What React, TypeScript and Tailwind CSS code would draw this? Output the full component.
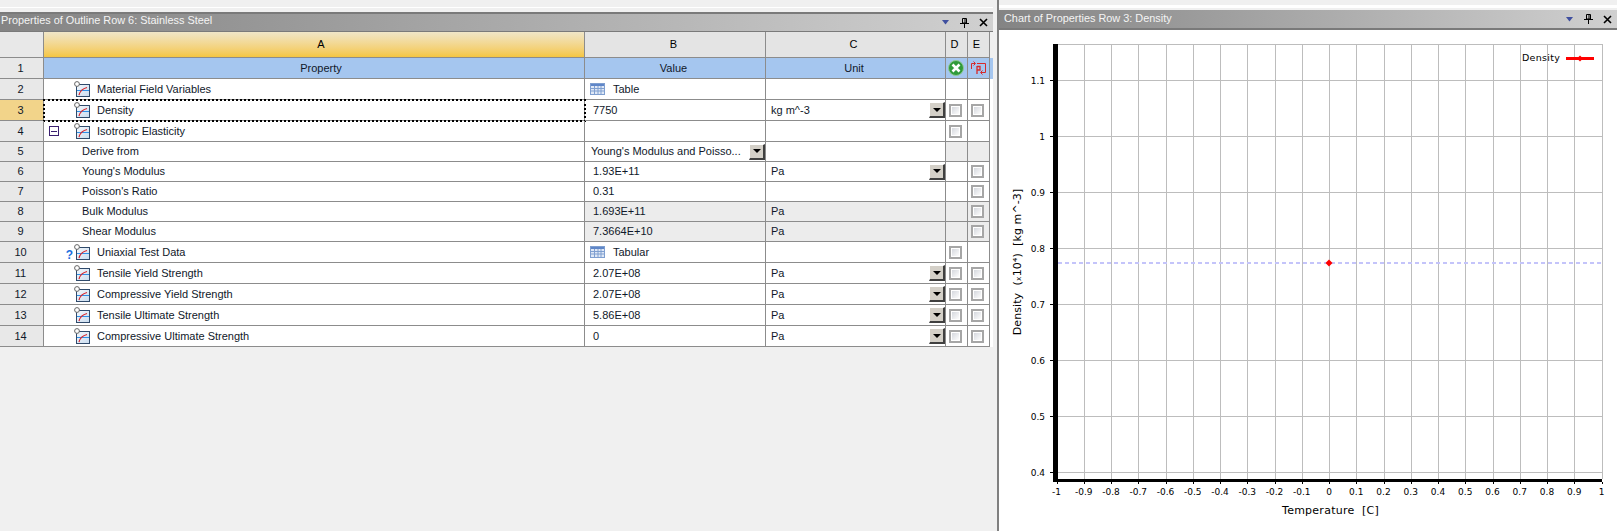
import React from 'react'

const cols = 'grid grid-cols-[44px_541px_181px_180px_22px_22px]'
const cell = 'border-r border-b border-[#8c8c8c] flex items-center min-w-0'

type RowData = {
  n: number
  h: string
  label: string
  kind: 'prop' | 'sub'
  q?: boolean
  minus?: boolean
  value?: string
  table?: boolean
  unit?: string
  unitDrop?: boolean
  valueDrop?: boolean
  d?: boolean
  e?: boolean
  grey?: boolean
  greyDE?: boolean
  active?: boolean
}

const rows: RowData[] = [
  { n: 2, h: 'h-[21px]', label: 'Material Field Variables', kind: 'prop', value: 'Table', table: true },
  { n: 3, h: 'h-[21px]', label: 'Density', kind: 'prop', value: '7750', unit: 'kg m^-3', unitDrop: true, d: true, e: true, active: true },
  { n: 4, h: 'h-[21px]', label: 'Isotropic Elasticity', kind: 'prop', minus: true, d: true },
  { n: 5, h: 'h-[20px]', label: 'Derive from', kind: 'sub', value: "Young's Modulus and Poisso...", valueDrop: true, greyDE: true },
  { n: 6, h: 'h-[20px]', label: "Young's Modulus", kind: 'sub', value: '1.93E+11', unit: 'Pa', unitDrop: true, e: true },
  { n: 7, h: 'h-[20px]', label: "Poisson's Ratio", kind: 'sub', value: '0.31', e: true },
  { n: 8, h: 'h-[20px]', label: 'Bulk Modulus', kind: 'sub', value: '1.693E+11', unit: 'Pa', e: true, grey: true },
  { n: 9, h: 'h-[20px]', label: 'Shear Modulus', kind: 'sub', value: '7.3664E+10', unit: 'Pa', e: true, grey: true },
  { n: 10, h: 'h-[21px]', label: 'Uniaxial Test Data', kind: 'prop', q: true, value: 'Tabular', table: true, d: true },
  { n: 11, h: 'h-[21px]', label: 'Tensile Yield Strength', kind: 'prop', value: '2.07E+08', unit: 'Pa', unitDrop: true, d: true, e: true },
  { n: 12, h: 'h-[21px]', label: 'Compressive Yield Strength', kind: 'prop', value: '2.07E+08', unit: 'Pa', unitDrop: true, d: true, e: true },
  { n: 13, h: 'h-[21px]', label: 'Tensile Ultimate Strength', kind: 'prop', value: '5.86E+08', unit: 'Pa', unitDrop: true, d: true, e: true },
  { n: 14, h: 'h-[21px]', label: 'Compressive Ultimate Strength', kind: 'prop', value: '0', unit: 'Pa', unitDrop: true, d: true, e: true },
]

function PropIcon() {
  return (
    <svg width="16" height="16" viewBox="0 0 16 16" className="shrink-0">
      <defs>
        <linearGradient id="propBg" x1="0" y1="0" x2="1" y2="1">
          <stop offset="0" stopColor="#f4f8fc" />
          <stop offset="1" stopColor="#c9dcef" />
        </linearGradient>
      </defs>
      <rect x="2.5" y="3.5" width="13" height="12" fill="url(#propBg)" stroke="#2f4a6b" />
      <path d="M3 9.5H15" stroke="#2f8fe8" />
      <path d="M5 14C6 10 9 7.5 13 6.5" stroke="#d8232a" strokeWidth="1.2" fill="none" />
      <circle cx="3" cy="3" r="2.4" fill="#fff" stroke="#666" />
    </svg>
  )
}

function TableIcon() {
  return (
    <svg width="15" height="12" viewBox="0 0 15 12" className="shrink-0">
      <rect x="0.5" y="0.5" width="14" height="11" fill="#dfe8f6" stroke="#7f9fd0" />
      <rect x="1" y="1" width="13" height="2" fill="#5f86c8" />
      <path d="M1 5.5H14M1 8H14M4.5 3V11M8 3V11M11 3V11" stroke="#7f9fd0" />
    </svg>
  )
}

function Drop() {
  return (
    <div className="w-4 h-4 shrink-0 bg-[#d4d0c8] border-t border-l border-white border-r-2 border-b-2 border-r-[#404040] border-b-[#404040] flex items-center justify-center">
      <svg width="8" height="4" viewBox="0 0 8 4">
        <path d="M0 0H8L4 4Z" fill="#000" />
      </svg>
    </div>
  )
}

function Check() {
  return (
    <div className="w-[13px] h-[13px] mr-[2px] border-2 border-[#a6a6a6] bg-white p-px">
      <div className="w-full h-full bg-gradient-to-br from-[#d5d8de] to-[#fdfdfd]" />
    </div>
  )
}

function TitleBar({ title, className, titlePad, iconPad }: { title: string; className: string; titlePad: string; iconPad: string }) {
  return (
    <div className={`flex items-center justify-between bg-gradient-to-r from-[#848484] to-[#d0d0d0] text-[#f4f4f4] text-[10.9px] ${className}`}>
      <span className={titlePad}>{title}</span>
      <div className={`flex items-center gap-[10px] ${iconPad}`}>
        <svg width="9" height="5" viewBox="0 0 9 5">
          <path d="M1 0H8L4.5 4.5Z" fill="#3f4f9f" />
        </svg>
        <svg width="9" height="10" viewBox="0 0 9 10">
          <path d="M2.5 .5H6.5V5H2.5ZM0 5.5H9M4.5 6V10M5 1V5" stroke="#000" fill="none" />
        </svg>
        <svg width="9" height="9" viewBox="0 0 9 9">
          <path d="M1 1L8 8M8 1L1 8" stroke="#000" strokeWidth="1.6" />
        </svg>
      </div>
    </div>
  )
}

function PropertiesTable() {
  return (
    <div className="text-[11px] text-[#10182a]">
      <div className={`${cols} h-[26px] text-black`}>
        <div className={`${cell} bg-[#e8e8e8]`} />
        <div className={`${cell} justify-center pl-[14px] bg-gradient-to-b from-[#f0e6c8] to-[#f5c63f]`}>A</div>
        <div className={`${cell} justify-center pr-[3px] bg-[#e4e4e4]`}>B</div>
        <div className={`${cell} justify-center pr-[4px] bg-[#e4e4e4]`}>C</div>
        <div className={`${cell} justify-center pr-[4px] bg-[#e4e4e4]`}>D</div>
        <div className={`${cell} justify-center pr-[4px] bg-[#e4e4e4]`}>E</div>
      </div>
      <div className={`${cols} h-[21px] bg-[#a5c6ef]`}>
        <div className={`${cell} justify-center pr-[2px] bg-[#e8e8e8]`}>1</div>
        <div className={`${cell} justify-center pl-[14px]`}>Property</div>
        <div className={`${cell} justify-center pr-[3px]`}>Value</div>
        <div className={`${cell} justify-center pr-[3px]`}>Unit</div>
        <div className={`${cell} justify-center pr-[2px]`}>
          <svg width="16" height="16" viewBox="0 0 16 16">
            <circle cx="8" cy="8" r="7.5" fill="#2f9a3a" stroke="#8fc794" />
            <path d="M4.5 4.5L11.5 11.5M11.5 4.5L4.5 11.5" stroke="#fff" strokeWidth="2.6" />
          </svg>
        </div>
        <div className={`${cell} justify-center`}>
          <svg width="17" height="16" viewBox="0 0 17 16" fill="none" stroke="#d62a2a">
            <path d="M1.5 9V3.5H5M3.5 1.5L5.5 3.5L3.5 5.5" />
            <path d="M7 3.5H15.5V9" />
            <path d="M15.5 9V12.5H11M12.5 10.5L10.5 12.5L12.5 14.5" />
            <path d="M7 6V14M7 6.5H10V10H7" strokeWidth="1.3" />
          </svg>
        </div>
      </div>
      {rows.map((r) => (
        <div key={r.n} className={`${cols} ${r.h} bg-white`}>
          <div className={`${cell} justify-center pr-[2px] ${r.active ? 'bg-[#f2d48a]' : 'bg-[#e8e8e8]'}`}>{r.n}</div>
          {r.kind === 'prop' ? (
            <div className={`${cell} ${r.active ? 'outline-2 outline-dotted outline-black -outline-offset-1' : ''}`}>
              <span className={`w-[30px] shrink-0 flex items-center ${r.q ? 'justify-end pr-px' : 'justify-start pl-[5px]'}`}>
                {r.minus && (
                  <span className="w-[10px] h-[10px] border border-[#3a1f70] flex items-center justify-center">
                    <span className="w-[6px] h-px bg-[#3a1f70]" />
                  </span>
                )}
                {r.q && <span className="text-[#1a6fe0] font-bold text-[12px] leading-none pt-[5px]">?</span>}
              </span>
              <PropIcon />
              <span className="pl-[7px] whitespace-nowrap">{r.label}</span>
            </div>
          ) : (
            <div className={cell}>
              <span className="pl-[38px]">{r.label}</span>
            </div>
          )}
          <div className={`${cell} ${r.grey ? 'bg-[#ececec]' : ''} ${r.table ? 'pl-[5px] gap-[8px]' : r.valueDrop ? 'pl-[6px] justify-between' : 'pl-[8px]'}`}>
            {r.table && <TableIcon />}
            <span className="whitespace-nowrap">{r.value}</span>
            {r.valueDrop && <Drop />}
          </div>
          <div className={`${cell} ${r.grey ? 'bg-[#ececec]' : ''} pl-[5px] justify-between`}>
            <span>{r.unit}</span>
            {r.unitDrop && <Drop />}
          </div>
          <div className={`${cell} justify-center ${r.grey || r.greyDE ? 'bg-[#ececec]' : ''}`}>{r.d && <Check />}</div>
          <div className={`${cell} justify-center ${r.grey || r.greyDE ? 'bg-[#ececec]' : ''}`}>{r.e && <Check />}</div>
        </div>
      ))}
    </div>
  )
}

const xTicks = ['-1', '-0.9', '-0.8', '-0.7', '-0.6', '-0.5', '-0.4', '-0.3', '-0.2', '-0.1', '0', '0.1', '0.2', '0.3', '0.4', '0.5', '0.6', '0.7', '0.8', '0.9', '1']
const yTicks = ['0.4', '0.5', '0.6', '0.7', '0.8', '0.9', '1', '1.1']

// chart coords are relative to the panel body, origin at (999, 30) on the page
function Chart() {
  const x0 = 57.5
  const dx = 27.25
  const yAt = (i: number) => 442 - i * 56
  return (
    <svg width="618" height="501" viewBox="0 0 618 501" className="block" fontFamily="'DejaVu Sans', sans-serif" fontSize="9" fill="#000">
      {xTicks.map((t, i) => (
        <g key={t}>
          <path d={`M${Math.round(x0 + i * dx) + 0.5} 14V449`} stroke="#bdbdbd" />
          <path d={`M${Math.round(x0 + i * dx) + 0.5} 452V454`} stroke="#000" />
          <text x={x0 + i * dx} y="465" textAnchor="middle">{t}</text>
        </g>
      ))}
      <path d="M54 14.5H603" stroke="#bdbdbd" />
      {yTicks.map((t, i) => (
        <g key={t}>
          <path d={`M54 ${yAt(i) + 0.5}H603`} stroke="#bdbdbd" />
          <path d={`M51 ${yAt(i) + 0.5}H54`} stroke="#000" />
          <text x="46" y={yAt(i) + 3.5} textAnchor="end">{t}</text>
        </g>
      ))}
      <path d="M56.5 14V452" stroke="#000" strokeWidth="5" />
      <path d="M54 450.5H603" stroke="#000" strokeWidth="3" />
      <path d="M59 233H603" stroke="#c4c4fa" strokeDasharray="4 3" strokeWidth="2" />
      <path d="M330 229.5L333.5 233L330 236.5L326.5 233Z" fill="#f00" />
      <text x="523" y="31" fontSize="9.5" letterSpacing="0.3">Density</text>
      <path d="M567 28.5H595" stroke="#f00" strokeWidth="3" />
      <path d="M581 25.5L584 28.5L581 31.5L578 28.5Z" fill="#f00" />
      <text x="331.5" y="484" textAnchor="middle" fontSize="11" letterSpacing="0.25" xmlSpace="preserve">Temperature  [C]</text>
      <text transform="translate(22 232) rotate(-90)" textAnchor="middle" fontSize="11" letterSpacing="0.1" xmlSpace="preserve">Density  (ₓ10⁴)  [kg m^-3]</text>
    </svg>
  )
}

export default function App() {
  return (
    <div className="w-[1617px] h-[531px] overflow-hidden bg-[#f0f0f0] flex font-['Liberation_Sans',sans-serif]">
      <div className="w-[998px] shrink-0 pr-[5px]">
        <div className="h-[7px]" />
        <div className="h-px bg-white" />
        <div className="h-[4px]" />
        <TitleBar
          title="Properties of Outline Row 6: Stainless Steel"
          className="h-[20px] border-t-2 border-b border-[#7a7a7a]"
          titlePad="pl-px pb-[4px]"
          iconPad="pr-[5px]"
        />
        <PropertiesTable />
      </div>
      <div className="flex-1 border-l-2 border-[#808080] -ml-px">
        <div className="h-[5px]" />
        <div className="h-[3px] bg-white" />
        <div className="h-[2px]" />
        <TitleBar
          title="Chart of Properties Row 3: Density"
          className="h-[20px] border-b-2 border-[#7a7a7a]"
          titlePad="pl-[5px] pb-[2px]"
          iconPad="pr-[5px]"
        />
        <div className="bg-white">
          <Chart />
        </div>
      </div>
    </div>
  )
}
